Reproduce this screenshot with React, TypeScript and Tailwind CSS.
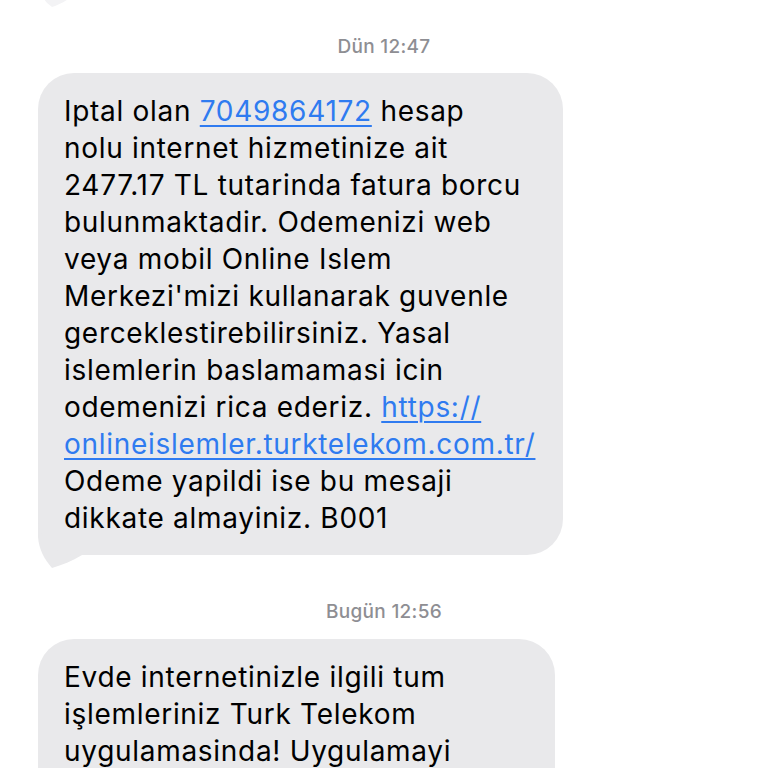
import React from "react";

const Tail = () => (
  <svg className="absolute z-0" style={{ left: 0, top: "calc(100% - 40px)" }} width="50" height="54" viewBox="0 0 50 54">
    <path d="M0 0 L0 22 C 1 34, 6 44, 14 53 C 24 50, 34 46, 44 40 L 44 0 Z" fill="#e9e9eb" />
  </svg>
);

const Link = ({ children }: { children: React.ReactNode }) => (
  <span className="text-[#2f7bf0] underline underline-offset-[4px] decoration-[1.5px]">{children}</span>
);

export default function App() {
  return (
    <div
      className="w-[768px] h-[768px] overflow-hidden bg-white relative"
      style={{ fontFamily: "Inter, 'Noto Sans', sans-serif" }}
    >
      {/* previous bubble's tail hint */}
      <svg className="absolute left-[40px] top-[-22px]" width="30" height="30" viewBox="0 0 30 30">
        <path d="M0 0 L0 10 C 1 18, 5 24, 12 29 C 18 27, 24 24, 30 20 L 30 0 Z" fill="#f3f3f5" />
      </svg>
      <div className="flex flex-col pt-[35px]">
        <div className="text-center text-[19px] leading-[24px] text-[#8e8e93] font-medium tracking-[0.3px]">
          Dün 12:47
        </div>
        <div className="mt-[14px] ml-[38px] relative w-[525px]">
          <div className="relative z-10 bg-[#e9e9eb] rounded-[36px] pl-[26px] pr-[20px] pt-[20px] pb-[18px] text-[28px] leading-[37px] text-black whitespace-nowrap tracking-[0.7px]">
            Iptal olan <Link>7049864172</Link> hesap
            <br />
            nolu internet hizmetinize ait
            <br />
            2477.17 TL tutarinda fatura borcu
            <br />
            bulunmaktadir. Odemenizi web
            <br />
            veya mobil Online Islem
            <br />
            Merkezi'mizi kullanarak guvenle
            <br />
            gerceklestirebilirsiniz. Yasal
            <br />
            islemlerin baslamamasi icin
            <br />
            odemenizi rica ederiz. <Link>https://</Link>
            <br />
            <Link>onlineislemler.turktelekom.com.tr/</Link>
            <br />
            Odeme yapildi ise bu mesaji
            <br />
            dikkate almayiniz. B001
          </div>
          <Tail />
        </div>
        <div className="mt-[45px] text-center text-[19px] leading-[24px] text-[#8e8e93] font-medium tracking-[0.3px]">
          Bugün 12:56
        </div>
        <div className="mt-[15px] ml-[38px] relative w-[517px]">
          <div className="relative z-10 bg-[#e9e9eb] rounded-[36px] pl-[26px] pr-[20px] pt-[20px] pb-[60px] text-[28px] leading-[37px] text-black whitespace-nowrap tracking-[0.7px]">
            Evde internetinizle ilgili tum
            <br />
            işlemleriniz Turk Telekom
            <br />
            uygulamasinda! Uygulamayi
          </div>
        </div>
      </div>
    </div>
  );
}
